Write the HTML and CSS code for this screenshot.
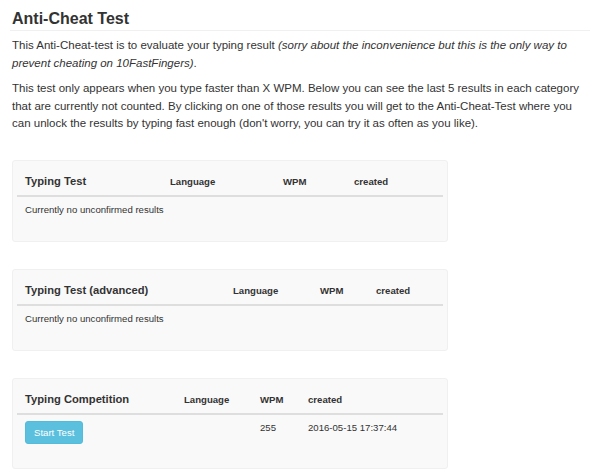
FILE: index.html
```html
<!DOCTYPE html>
<html>
<head>
<meta charset="utf-8">
<link rel="stylesheet" href="styles.css">
</head>
<body>
<div class="page">
  <h1 class="title">Anti-Cheat Test</h1>
  <p class="intro">This Anti-Cheat-test is to evaluate your typing result <em>(sorry about the inconvenience but this is the only way to prevent cheating on 10FastFingers)</em>.</p>
  <p class="intro">This test only appears when you type faster than X WPM. Below you can see the last 5 results in each category that are currently not counted. By clicking on one of those results you will get to the Anti-Cheat-Test where you can unlock the results by typing fast enough (don't worry, you can try it as often as you like).</p>

  <div class="well well-first">
    <table class="results">
      <colgroup><col class="w1a"><col class="w1b"><col class="w1c"><col class="w1d"></colgroup>
      <thead><tr><th class="cat">Typing Test</th><th>Language</th><th>WPM</th><th>created</th></tr></thead>
      <tbody><tr><td colspan="4">Currently no unconfirmed results</td></tr></tbody>
    </table>
  </div>

  <div class="well">
    <table class="results">
      <colgroup><col class="w2a"><col class="w2b"><col class="w2c"><col class="w2d"></colgroup>
      <thead><tr><th class="cat">Typing Test (advanced)</th><th>Language</th><th>WPM</th><th>created</th></tr></thead>
      <tbody><tr><td colspan="4">Currently no unconfirmed results</td></tr></tbody>
    </table>
  </div>

  <div class="well">
    <table class="results">
      <colgroup><col class="w3a"><col class="w3b"><col class="w3c"><col class="w3d"></colgroup>
      <thead><tr><th class="cat">Typing Competition</th><th>Language</th><th>WPM</th><th>created</th></tr></thead>
      <tbody><tr><td><a class="btn-info">Start Test</a></td><td></td><td>255</td><td>2016-05-15 17:37:44</td></tr></tbody>
    </table>
  </div>
</div>
</body>
</html>
```
FILE: styles.css
```css
html, body {
  margin: 0;
  padding: 0;
  background: #fff;
}
body {
  font-family: "Liberation Sans", Arial, Helvetica, sans-serif;
  color: #333;
}
.page {
  padding: 0 7px 0 12px;
}
.title {
  font-size: 16px;
  line-height: 20px;
  font-weight: bold;
  margin: 9px -7px 0 -2px;
  padding: 0 0 1px 2px;
  border-bottom: 1px solid #f0f0f0;
  color: #333;
}
.intro {
  font-size: 11.5px;
  line-height: 17.6px;
  margin: 6px 0 8px;
}
.intro em {
  font-style: italic;
}
.well {
  width: 426px;
  padding: 5px 4px 18px;
  background: #f9f9f9;
  border: 1px solid #f0f0f0;
  border-radius: 3px;
  margin-bottom: 27px;
}
.well-first {
  margin-top: 27px;
}
.results {
  width: 426px;
  table-layout: fixed;
  border-collapse: collapse;
  border-spacing: 0;
}
.results th {
  text-align: left;
  vertical-align: bottom;
  font-size: 9.6px;
  font-weight: bold;
  line-height: 14px;
  padding: 7px 8px 6px;
  border-bottom: 2px solid #dedede;
}
.results th.cat {
  font-size: 11.2px;
  line-height: 16px;
}
.results td {
  vertical-align: top;
  font-size: 9.6px;
  line-height: 14px;
  padding: 6px 8px;
}
.btn-info {
  display: inline-block;
  background: #5bc0de;
  border: 1px solid #52bcdc;
  color: #fff;
  font-size: 9.6px;
  line-height: 13px;
  padding: 4px 8px;
  border-radius: 3px;
}
.w1a { width: 145px; } .w1b { width: 113px; } .w1c { width: 71px; } .w1d { width: 97px; }
.w2a { width: 208px; } .w2b { width: 87px; } .w2c { width: 56px; } .w2d { width: 75px; }
.w3a { width: 159px; } .w3b { width: 76px; } .w3c { width: 48px; } .w3d { width: 143px; }
```
